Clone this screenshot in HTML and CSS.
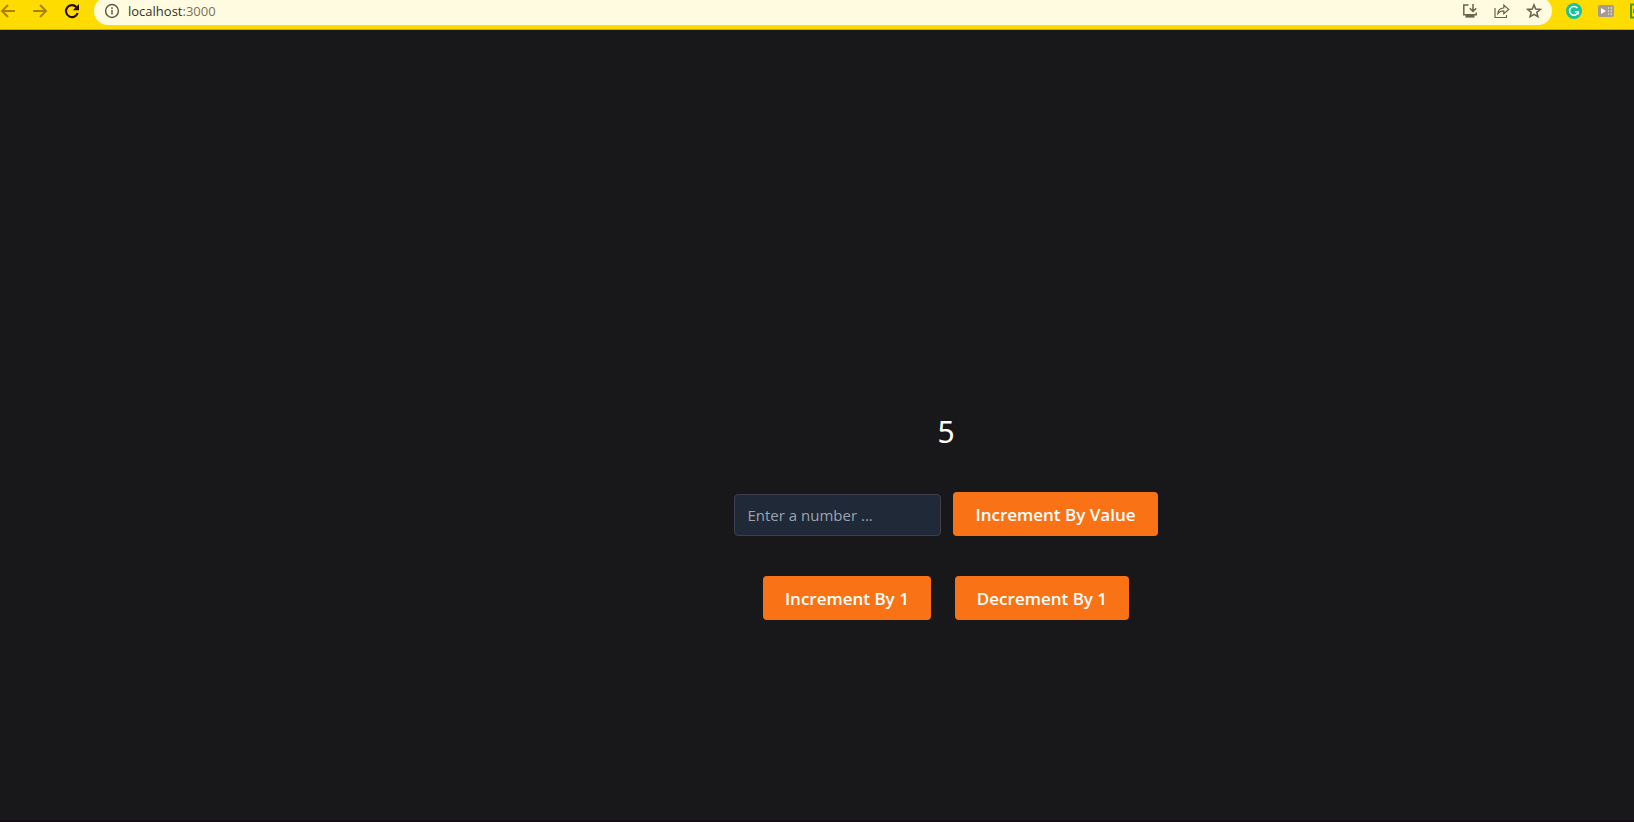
FILE: index.html
```html
<!DOCTYPE html>
<html lang="en">
<head>
<meta charset="utf-8">
<title>Counter</title>
<link rel="stylesheet" href="styles.css">
</head>
<body>
<header class="toolbar">
  <nav class="nav">
    <button class="icon faded" aria-label="Back"><svg viewBox="0 0 16 16"><path d="M15 8H2M8 2L2 8l6 6"/></svg></button>
    <button class="icon faded" aria-label="Forward"><svg viewBox="0 0 16 16"><path d="M1 8h13M8 2l6 6-6 6"/></svg></button>
    <button class="icon reload" aria-label="Reload"><svg viewBox="0 0 16 16"><path d="M13.7 10A6 6 0 1 1 12.4 4"/><path class="solid" d="M15 1v6.2H8.8z"/></svg></button>
  </nav>
  <div class="address">
    <svg class="glyph info" viewBox="0 0 16 16" aria-hidden="true"><circle cx="8" cy="8" r="6.4"/><path d="M8 7v4.5M8 4.3v1.6"/></svg>
    <span class="url">localhost<span class="port">:3000</span></span>
    <button class="icon" aria-label="Install"><svg viewBox="0 0 16 16"><path d="M6.500 2H1.800v9.700h12.400V9.500M11 1v7M7.800 5.200L11 8.400l3.200-3.200"/><path class="solid" d="M3.500 12h9v2.600h-9z"/></svg></button>
    <button class="icon share" aria-label="Share"><svg viewBox="0 0 16 16"><path d="M1 5v9.500h11.500V12M3.800 10.600C4 7 6 5.200 9.800 5V2l5 4.500-5 4.300V7.900c-2.700 0-4.500.8-6 2.700z"/></svg></button>
    <button class="icon" aria-label="Bookmark"><svg viewBox="0 0 16 16"><path d="M8 1.900l1.700 4.200 4.600.3-3.500 2.900 1.100 4.400L8 11.300l-3.900 2.400 1.100-4.400-3.500-2.900 4.600-.3z"/></svg></button>
  </div>
  <div class="extensions">
    <button class="icon" aria-label="Writing assistant"><svg viewBox="0 0 16 16"><circle class="teal" cx="8" cy="8" r="8"/><path class="white" d="M11.400 5A4.400 4.400 0 1 0 12.300 8.700H9M12.300 8.500v3"/></svg></button>
    <button class="icon" aria-label="Video player"><svg viewBox="0 0 16 16"><rect class="gray" y="2" width="16" height="12" rx="2"/><path class="white-fill" d="M3 5l5 3-5 3z"/><path class="light" d="M10 5h1M12.500 5h1.500M10 8h1M12.500 8h1.500M10 11h1M12.500 11h1.500"/></svg></button>
    <button class="icon" aria-label="Capture"><svg viewBox="0 0 16 16"><path class="green" d="M6 1.500H1V14.500h5M4 6v4"/></svg></button>
  </div>
</header>
<main class="page">
  <section class="counter">
    <output class="count">5</output>
    <form class="row entry">
      <input class="field" type="text" placeholder="Enter a number ..." aria-label="Enter a number">
      <button class="btn" type="button">Increment By Value</button>
    </form>
    <div class="row steps">
      <button class="btn" type="button">Increment By 1</button>
      <button class="btn" type="button">Decrement By 1</button>
    </div>
  </section>
</main>
</body>
</html>
```
FILE: styles.css
```css
* { box-sizing: border-box; }

body {
  margin: 0;
  min-height: 100vh;
  display: flex;
  flex-direction: column;
  overflow: hidden;
  background: #18181b;
  color: #fff;
  font-family: "Open Sans", "Noto Sans", sans-serif;
}

/* Browser bar */
.toolbar {
  display: flex;
  height: 30px;
  overflow: hidden;
  background: #ffdc00;
  border-bottom: 1px solid #c9a70f;
}

.nav,
.extensions {
  display: flex;
  gap: 16px;
  height: 22px;
  align-items: center;
  flex: none;
}

.nav { margin-right: 14px; }

.extensions {
  width: 68px;
  margin-left: 14px;
  overflow: hidden;
}

.address {
  flex: 1;
  display: flex;
  align-items: center;
  gap: 16px;
  height: 28px;
  margin-top: -3px;
  padding: 0 10px;
  border-radius: 14px;
  background: #fffbe0;
}

.icon {
  flex: none;
  width: 16px;
  height: 16px;
  padding: 0;
  border: 0;
  background: none;
  color: #68644f;
}

svg {
  display: block;
  width: 16px;
  height: 16px;
  fill: none;
  stroke: currentColor;
  stroke-width: 1.5;
}

.glyph { flex: none; color: #5f5b4b; }
.faded { color: #a88308; }
.faded svg { stroke-width: 2; }
.reload { color: #2b0d05; }
.reload svg { stroke-width: 2.2; }
.share svg { stroke-width: 1.2; }
.solid { fill: currentColor; stroke: none; }
.teal { fill: #15c39a; stroke: none; }
.white { stroke: #fff; }
.gray { fill: #a49b92; stroke: none; }
.white-fill { fill: #fff; stroke: none; }
.light { stroke: #e4dfd8; }
.green { stroke: #4d9a1c; stroke-width: 2; }

.url {
  flex: 1;
  margin-left: -8px;
  color: #35322a;
  font-size: 13px;
  line-height: 20px;
}

.port { color: #77735f; }

/* Counter page */
.page {
  flex: 1;
  display: flex;
  align-items: center;
  justify-content: center;
  padding: 182px 0 0 258px;
  border-bottom: 2px solid #140e14;
}

.counter {
  display: flex;
  flex-direction: column;
  align-items: center;
  gap: 40px;
}

.count {
  font-family: "Noto Sans", sans-serif;
  font-size: 30px;
  line-height: 40px;
}

.row { display: flex; }

.entry {
  align-items: flex-end;
  gap: 12px;
}

.steps { gap: 24px; }

.field {
  width: 207px;
  height: 42px;
  padding: 0 12px;
  border: 1px solid #3f3f4a;
  border-radius: 4px;
  background: #1f2937;
  color: #fff;
  font: 15px/24px "Open Sans", "Noto Sans", sans-serif;
}

.field::placeholder { color: #9ca3af; opacity: 1; }

.btn {
  height: 44px;
  padding: 2px 22px 0;
  border: 0;
  border-radius: 4px;
  background: #f97316;
  color: #fff;
  font: 600 17px/28px "Open Sans", "Noto Sans", sans-serif;
}
```
